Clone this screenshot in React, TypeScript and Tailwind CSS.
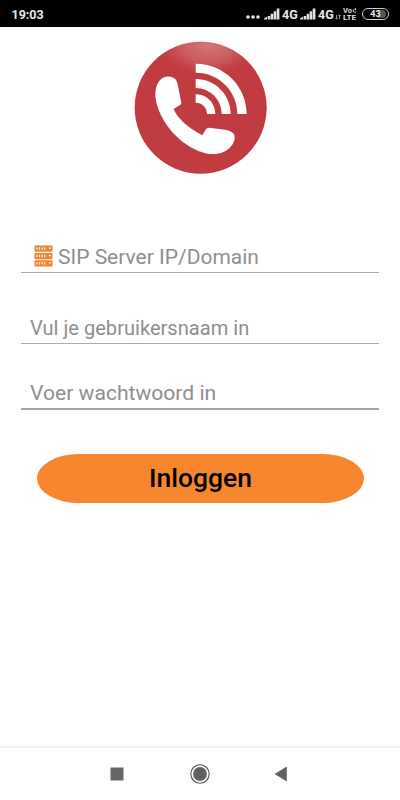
function Signal() {
  return (
    <svg width="16" height="12" viewBox="0 0 16 12" fill="#e4e4e4">
      <path d="M0 11.5V10.5L3 8.8V11.5ZM3.7 8H6.2V11.5H3.7ZM6.7 5.8H9.2V11.5H6.7ZM9.7 3.2H12.2V11.5H9.7ZM12.7 .6H15.4V11.5H12.7Z" />
    </svg>
  );
}

function StatusBar() {
  return (
    <header className="flex h-[27px] items-center bg-black pl-[11.5px] pr-[11px] text-[#e8e8e8]">
      <span className="mt-[3px] text-[12.5px] leading-none font-bold">19:03</span>
      <div className="ml-auto flex items-center">
        <svg className="mr-[4px] mt-[7px]" width="14" height="4" viewBox="0 0 14 4" fill="#e8e8e8">
          <circle cx="2" cy="2" r="1.8" />
          <circle cx="7" cy="2" r="1.8" />
          <circle cx="12" cy="2" r="1.8" />
        </svg>
        <Signal />
        <span className="ml-[2px] mt-[3px] w-[18px] text-[12.5px] leading-none font-bold">4G</span>
        <Signal />
        <span className="ml-[2px] mt-[3px] w-[17px] text-[12.5px] leading-none font-bold">4G</span>
        <svg className="mr-[1px] mt-[6px]" width="7" height="6" viewBox="0 0 7 6" fill="none" stroke="#aaa" strokeWidth=".9">
          <path d="M1.5 1V5M.5 4L1.5 5.2L2.5 4M4.5 5V1M3.5 2L4.5 .8L5.5 2" />
        </svg>
        <svg className="mt-[1px] mr-[5px]" width="14" height="14" viewBox="0 0 14 14" fill="#dedede">
          <text x="0" y="6.2" fontSize="7.5" fontWeight="700" textLength="9" lengthAdjust="spacingAndGlyphs">Vo</text>
          <path d="M9.8 2.5H10.8V5H9.8ZM11.6 1.8L13 .8V3L11.6 3.6ZM11.6 4.2H12.6V6H11.6Z" />
          <text x="0" y="13" fontSize="7.5" fontWeight="700" textLength="13" lengthAdjust="spacingAndGlyphs">LTE</text>
        </svg>
        <div className="flex h-[12px] w-[27px] items-center justify-center rounded-full border border-[#ccc]">
          <div className="h-[8px] w-[21px] rounded-full bg-gradient-to-r from-black from-60% to-[#555] to-60% text-center text-[9px] leading-[8.5px] font-bold">43</div>
        </div>
      </div>
    </header>
  );
}

function Logo() {
  return (
    <svg className="ml-[130px] mt-[8px] block" width="142" height="145" viewBox="0 0 426 435">
      <defs>
        <clipPath id="disc">
          <circle cx="212" cy="218" r="198" />
        </clipPath>
        <radialGradient id="shine">
          <stop offset="0" stopColor="#fff" stopOpacity=".3" />
          <stop offset=".5" stopColor="#fff" stopOpacity=".18" />
          <stop offset="1" stopColor="#fff" stopOpacity="0" />
        </radialGradient>
      </defs>
      <circle cx="212" cy="218" r="198" fill="#c13c40" />
      <g clipPath="url(#disc)">
        <ellipse cx="235" cy="32" rx="140" ry="84" fill="url(#shine)" />
      </g>
      <path
        fill="#fff"
        d="M104 126Q121 121 135 131Q141 136 143 148L154 203Q155 208 149 211L131 222Q149 265 217 301L228 283Q231 278 237 278L286 284Q304 287 312 298Q317 311 309 326Q293 352 258 357C210 361 150 324 114 275C84 234 69 187 79 156Q85 134 104 126Z"
      />
      <g fill="#fff">
        <path d="M197 86C282 86 350 154 350 237H322C322 169 267 113 197 113Z" />
        <path d="M197 132C256 132 302 180 302 237H275C275 194 240 159 197 159Z" />
        <path d="M197 178C230 178 256 204 256 237H231C231 217 216 203 197 203Z" />
      </g>
    </svg>
  );
}

function ServerIcon() {
  return (
    <svg className="ml-[13px] mb-[5px] mr-[5px] shrink-0" width="19" height="22" viewBox="0 0 19 22">
      {[0.5, 8, 15.2].map((y) => (
        <g key={y} transform={`translate(0 ${y})`}>
          <rect x="0.5" width="18" height="6.2" rx="1" fill="#ee842f" />
          <path d="M3 1.7V4.3M5.6 1.7V4.3M8.2 1.7V4.3M10.8 1.7V4.3" stroke="#fff1e2" strokeWidth="1.2" />
          <circle cx="15.8" cy="2.6" r=".9" fill="#fff" />
        </g>
      ))}
    </svg>
  );
}

export default function App() {
  return (
    <div className="flex h-[800px] w-[400px] flex-col overflow-hidden bg-white font-[Roboto,sans-serif]">
      <StatusBar />
      <Logo />
      <main className="flex flex-col pl-[21px] pr-[21px] text-[#8e8e8e]">
        <div className="mt-[52px] flex h-[41px] items-end border-b border-[#a9a9a9]">
          <ServerIcon />
          <span className="mb-[3px] text-[21px] leading-[24px] whitespace-nowrap">SIP Server IP/Domain</span>
        </div>
        <div className="mt-[30px] flex h-[41px] items-end border-b border-[#a9a9a9] pl-[9px]">
          <span className="mb-[3px] text-[20.1px] leading-[24px] whitespace-nowrap">Vul je gebruikersnaam in</span>
        </div>
        <div className="mt-[24px] flex h-[42px] items-end border-b-2 border-[#a5a5a5] pl-[9px]">
          <span className="mb-[3px] text-[21.1px] leading-[24px] whitespace-nowrap">Voer wachtwoord in</span>
        </div>
        <button className="mt-[44px] ml-[16px] h-[49px] w-[327px] rounded-[42px/24.5px] bg-[#f7872f] pb-px text-[26.5px] leading-[48px] font-medium text-black">
          Inloggen
        </button>
      </main>
      <nav className="mt-auto flex h-[54px] items-center border-t-2 border-[#f3f3f3]">
        <svg className="ml-[110px]" width="14" height="14">
          <rect x=".5" y=".5" width="13" height="13" fill="#666" />
        </svg>
        <svg className="ml-[66px]" width="20" height="20" viewBox="0 0 20 20">
          <circle cx="10" cy="10" r="9.2" fill="none" stroke="#555" strokeWidth="1.1" />
          <circle cx="10" cy="10" r="6.9" fill="#606060" />
        </svg>
        <svg className="ml-[64px]" width="15" height="16" viewBox="0 0 15 16">
          <path d="M1 8L12.5 1V15Z" fill="#606060" stroke="#606060" strokeLinejoin="round" strokeWidth=".6" />
        </svg>
      </nav>
    </div>
  );
}
